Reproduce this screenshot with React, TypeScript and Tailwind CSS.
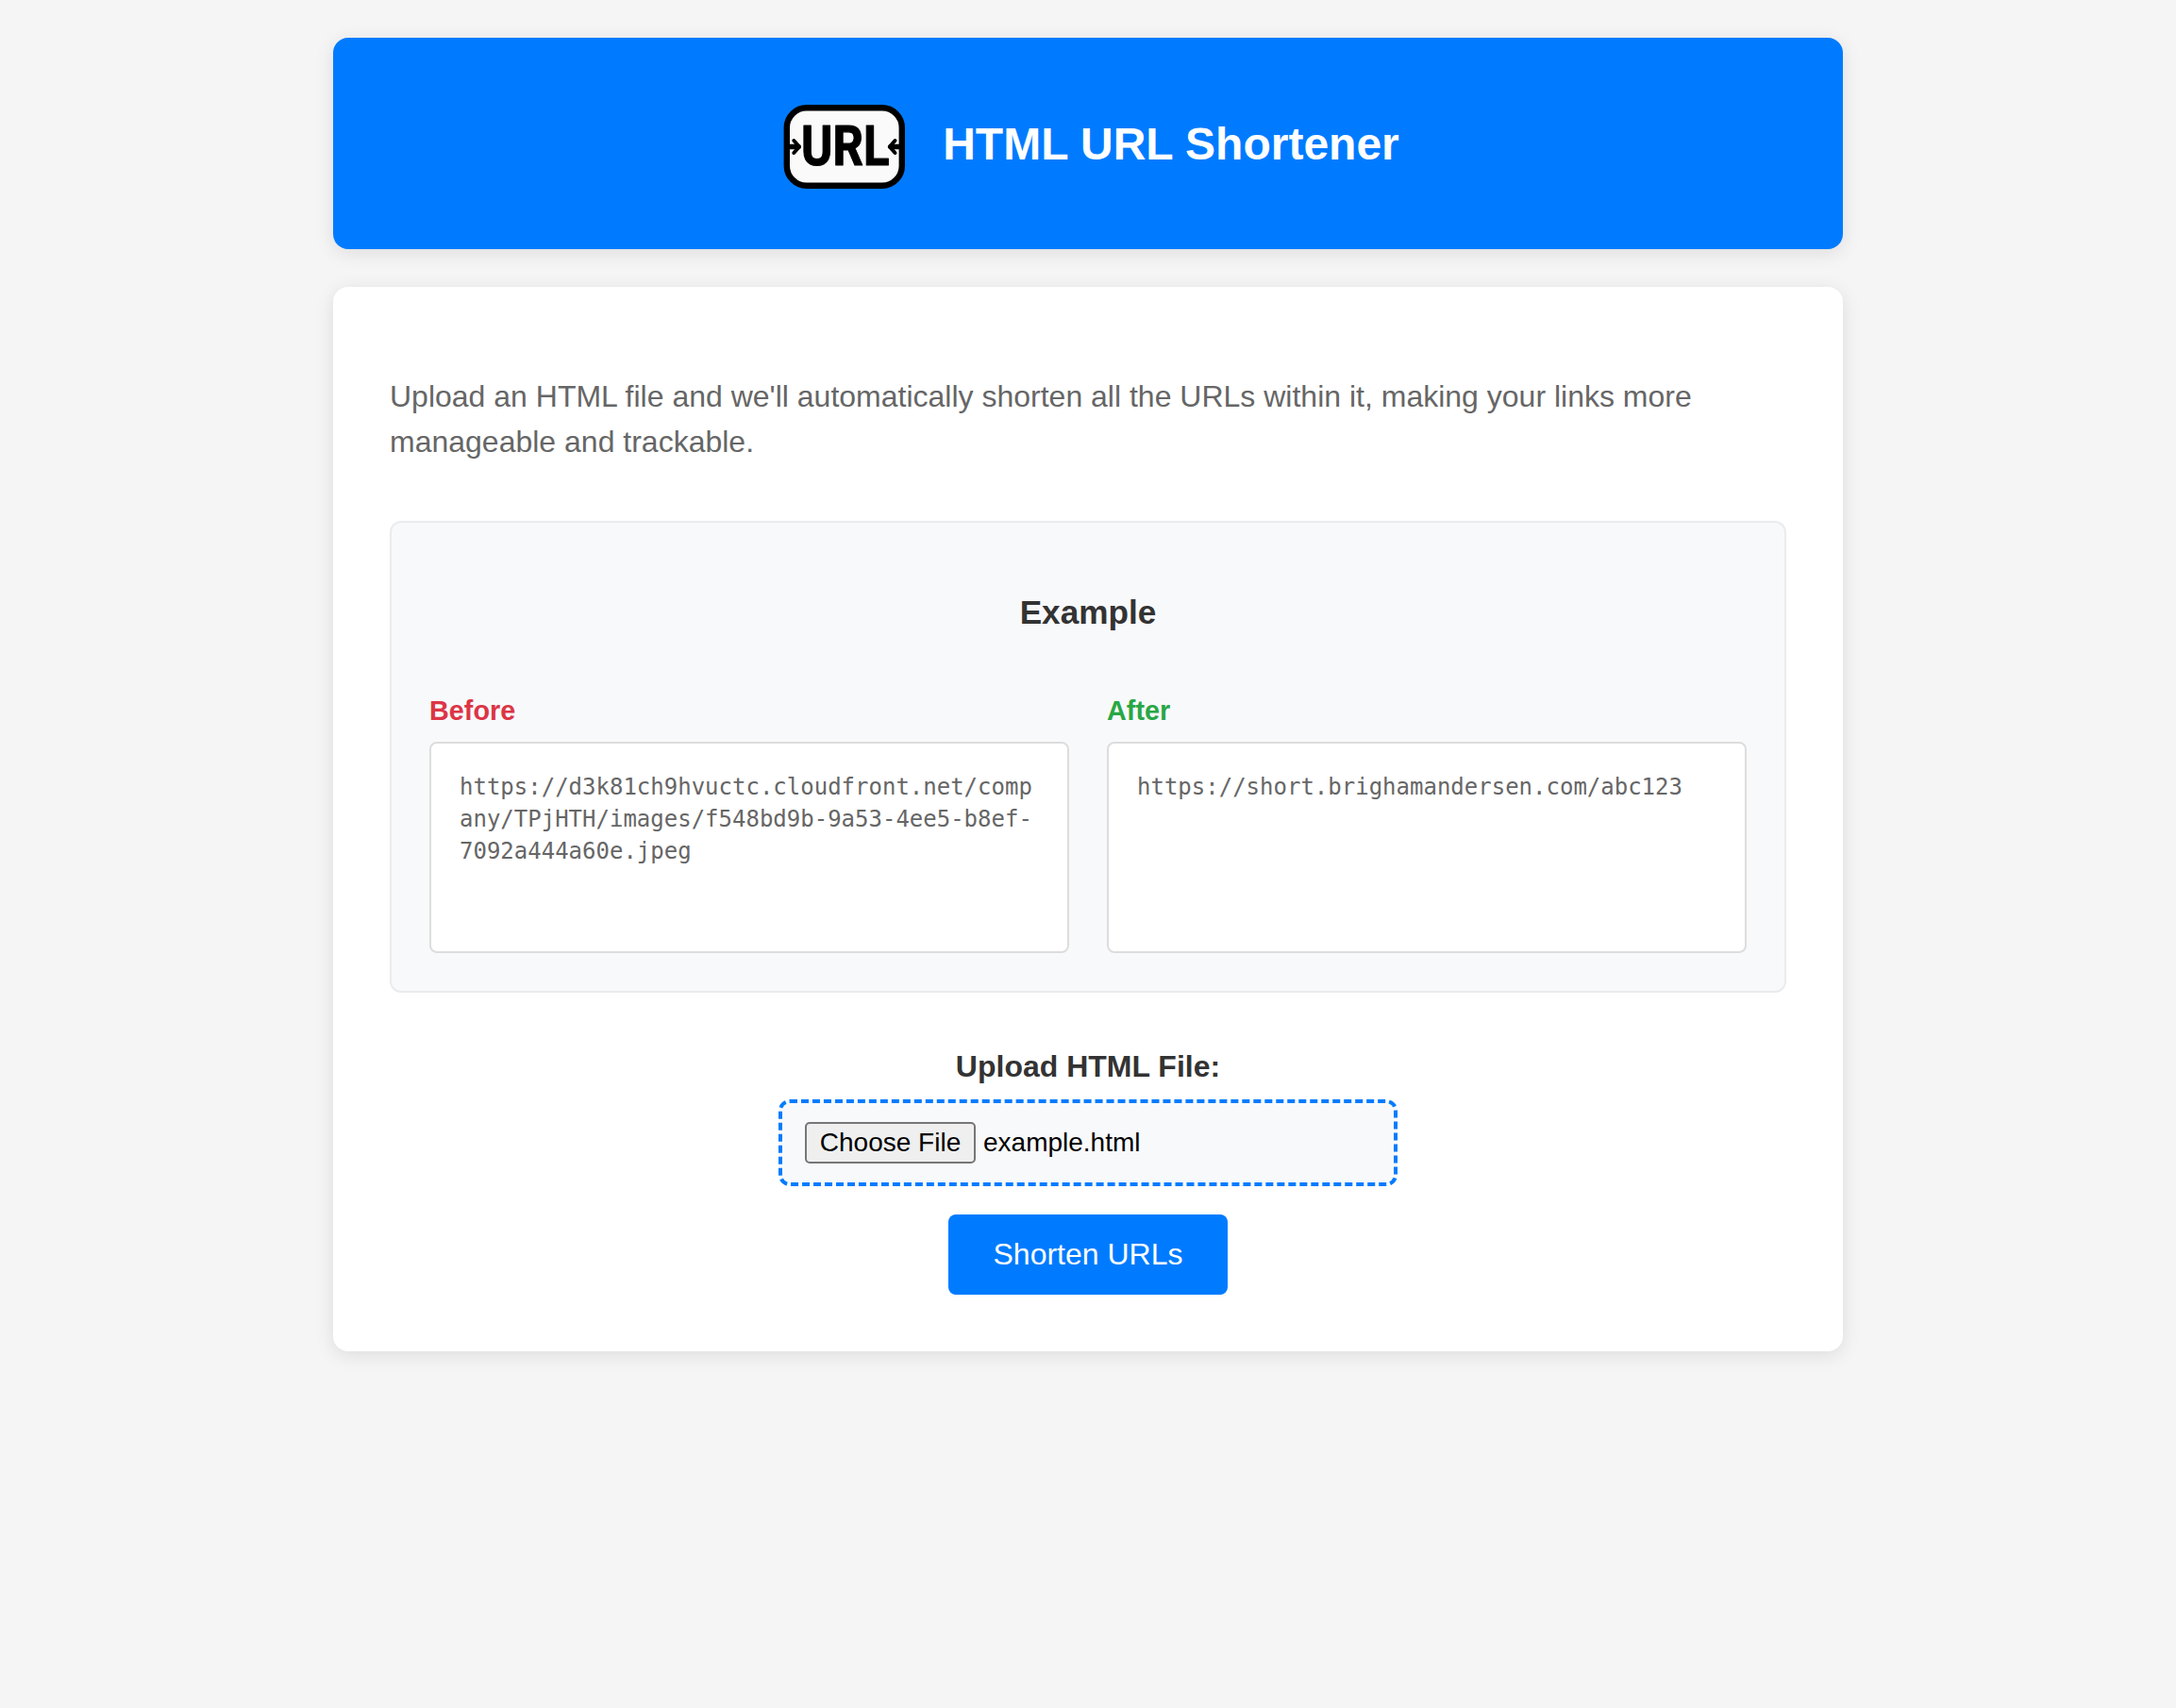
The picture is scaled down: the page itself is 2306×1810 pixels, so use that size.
function Logo() {
  return (
    <svg className="h-[90px] w-[130px] shrink-0" viewBox="830 111 130 90" aria-hidden="true">
      <rect x="833.8" y="114.3" width="122" height="82.4" rx="21" fill="#fafafa" stroke="#000" strokeWidth="6.4" />
      <g fill="none" stroke="#000" strokeLinecap="round" strokeLinejoin="round">
        <path d="M836 155.500H846M954 155.500H944" strokeWidth="5.600" />
        <path d="M841.300 149l5.700 6.500l-5.700 6.500M948.500 149l-5.700 6.500l5.700 6.500" strokeWidth="4" />
      </g>
      <text
        x="987.1 1026.3 1064"
        y="175.500"
        transform="scale(0.86 1)"
        fontFamily="Roboto"
        fontWeight="700"
        fontSize="59"
        stroke="#000"
        strokeWidth="1.200"
        strokeLinejoin="round"
      >
        URL
      </text>
    </svg>
  );
}

function UrlPanel({ title, titleClass, url }: { title: string; titleClass: string; url: string }) {
  return (
    <div className="min-w-0 flex-1">
      <h4 className={`mb-2.5 text-[28.8px] leading-[46px] font-bold ${titleClass}`}>{title}</h4>
      <div className="h-[224px] rounded-[8px] border-2 border-[#dddddd] bg-white px-[30px] pt-[29px] font-['DejaVu_Sans_Mono',monospace] text-[24px] leading-[34px] break-all text-[#666666]">
        {url}
      </div>
    </div>
  );
}

export default function App() {
  return (
    <div className="min-h-screen bg-[#f5f5f5] py-10 font-['Liberation_Sans',Arial,sans-serif] text-[#333333]">
      <div className="mx-auto flex w-[1600px] flex-col gap-10">
        <header className="flex h-[224px] items-center justify-center gap-[39px] rounded-[16px] bg-[#007bff] pl-[7px] shadow-[0_4px_20px_rgba(0,0,0,0.1)]">
          <div className="mt-2">
            <Logo />
          </div>
          <h1 className="mt-0.5 text-[48px] leading-[72px] font-bold text-white">HTML URL Shortener</h1>
        </header>

        <main className="h-[1128px] rounded-[16px] bg-white px-[60px] pt-[92px] shadow-[0_4px_20px_rgba(0,0,0,0.1)]">
          <p className="text-[32px] leading-[48px] text-[#666666]">
            Upload an HTML file and we'll automatically shorten all the URLs within it, making your links more
            manageable and trackable.
          </p>

          <section className="mt-[60px] h-[500px] rounded-[12px] border-2 border-[#e9ecef] bg-[#f8f9fb] px-10 pt-[67px]">
            <h3 className="text-center text-[35.2px] leading-[56px] font-bold">Example</h3>
            <div className="mt-[53px] flex gap-10">
              <UrlPanel
                title="Before"
                titleClass="text-[#dc3545]"
                url="https://d3k81ch9hvuctc.cloudfront.net/company/TPjHTH/images/f548bd9b-9a53-4ee5-b8ef-7092a444a60e.jpeg"
              />
              <UrlPanel title="After" titleClass="text-[#28a745]" url="https://short.brighamandersen.com/abc123" />
            </div>
          </section>

          <form className="mt-[53px] flex flex-col items-center" onSubmit={(e) => e.preventDefault()}>
            <span className="text-[32px] leading-[51px] font-bold">Upload HTML File:</span>
            <div className="mt-[9px] flex h-[92px] w-[656px] items-center rounded-[12px] border-4 border-dashed border-[#007bff] bg-[#f8f9fb] px-6 text-[28px] leading-[34px] text-black">
              <button
                type="button"
                className="h-[44px] w-[181px] rounded-[5px] border-2 border-[#767676] bg-[#efefef] whitespace-nowrap"
              >
                Choose File
              </button>
              <span className="ml-2">example.html</span>
            </div>
            <button
              type="submit"
              className="mt-[30px] h-[85px] w-[296px] rounded-[8px] bg-[#007bff] pb-0.5 text-[32px] whitespace-nowrap text-white"
            >
              Shorten URLs
            </button>
          </form>
        </main>
      </div>
    </div>
  );
}
